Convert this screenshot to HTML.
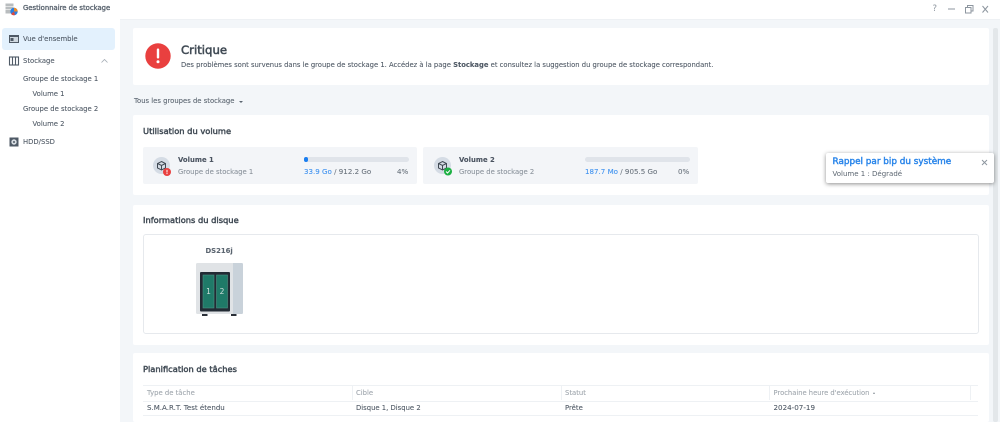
<!DOCTYPE html>
<html><head><meta charset="utf-8">
<style>
html{background:#f3f6f9}
html,body{margin:0;padding:0;width:1000px;height:422px;overflow:hidden;font-family:"DejaVu Sans","Liberation Sans",sans-serif;color:#4a5360}
body{filter:blur(.2px)}
.a{position:absolute;white-space:nowrap}
.t{font-size:6.85px;line-height:10px;-webkit-text-stroke:.08px currentColor}
.card{position:absolute;left:133px;width:856px;background:#fff;border-radius:2px}
.h{font-size:8.3px;line-height:12px;color:#414b55;-webkit-text-stroke:.45px #414b55}
.box{position:absolute;top:147px;height:37px;background:#f3f5f8;border-radius:2px}
.bar{position:absolute;top:157px;width:105px;height:4.5px;background:#e0e4ea;border-radius:3px}
svg{position:absolute;overflow:visible}
</style></head><body>
<div class="a" style="left:0;top:0;width:1000px;height:18.5px;background:#fff;border-bottom:1px solid #eef1f4"></div>
<div class="a" style="left:0;top:19px;width:120px;height:403px;background:#fff"></div>

<svg style="left:5px;top:3px" width="13" height="13" viewBox="0 0 13 13"><rect x="0.5" y="0.5" width="8" height="10" fill="#b9bdbf"/><path d="M0.5 3.5h8M0.5 6.5h8" stroke="#eee" stroke-width=".8"/><circle cx="9" cy="8.5" r="3.7" fill="#2b7fe0"/><path d="M9 4.8a3.7 3.7 0 0 1 3.7 3.7H9z" fill="#f08a24"/><path d="M6 11a3.7 3.7 0 0 0 4 1l-1-3.500z" fill="#e0483c"/></svg>
<div class="a t" style="left:23px;top:3px;color:#5b6570;-webkit-text-stroke:.35px #5b6570">Gestionnaire de stockage</div>

<div class="a" style="left:932.500px;top:4px;font-size:8.5px;line-height:11px;color:#8d969f">?</div>
<svg style="left:945px;top:4px" width="50" height="10" viewBox="0 0 50 10" fill="none" stroke="#8d969f" stroke-width="1"><path d="M3 5h7"/><path d="M20.500 3.500h5.500v5.500h-5.500zM22.500 3.500V1.500h5.500v5.500h-2"/><path d="M37.500 2l5.500 6.500M43 2l-5.500 6.500"/></svg>

<div class="a" style="left:2px;top:28px;width:113px;height:22px;background:#e3f1fd;border-radius:3px"></div>
<svg style="left:9px;top:34px" width="10" height="10" viewBox="0 0 10 10"><rect x="0" y="1" width="10" height="8" fill="#4f5a66"/><rect x="1" y="3" width="8" height="5" fill="#cfd8e0"/><rect x="1.500" y="4" width="3" height="3" fill="#4f5a66"/></svg>
<div class="a t" style="left:23px;top:34px;color:#4f5965">Vue d'ensemble</div>
<svg style="left:9px;top:56px" width="10" height="10" viewBox="0 0 10 10" fill="none" stroke="#4f5a66" stroke-width="1.100"><rect x=".5" y="1" width="9" height="8"/><path d="M3.500 1v8M6.500 1v8"/></svg>
<div class="a t" style="left:23px;top:56px;color:#4f5965">Stockage</div>
<svg style="left:101px;top:59px" width="7" height="4" viewBox="0 0 7 4" fill="none" stroke="#a5adb5" stroke-width=".8"><path d="M.5 3.500L3.500.5l3 3"/></svg>
<div class="a t" style="left:23px;top:74px;color:#4f5965">Groupe de stockage 1</div>
<div class="a t" style="left:32.500px;top:89px;color:#4f5965">Volume 1</div>
<div class="a t" style="left:23px;top:104px;color:#4f5965">Groupe de stockage 2</div>
<div class="a t" style="left:32.500px;top:119px;color:#4f5965">Volume 2</div>
<svg style="left:9px;top:137px" width="10" height="10" viewBox="0 0 10 10"><rect x="0.500" y="0.500" width="9" height="9" fill="#4f5a66"/><circle cx="5" cy="5" r="2.700" fill="#d8dde2"/><circle cx="5" cy="5" r="1" fill="#4f5a66"/></svg>
<div class="a t" style="left:23px;top:137px;color:#4f5965">HDD/SSD</div>

<div class="a" style="left:993px;top:28px;width:4.500px;height:394px;background:#e3e7ea;border-radius:2px"></div>

<div class="card" style="top:28px;height:57px"></div>
<svg style="left:145px;top:43px" width="26" height="26" viewBox="0 0 26 26"><circle cx="13" cy="13" r="12.700" fill="#e9403f"/><rect x="11.800" y="5.500" width="2.400" height="10" rx="1" fill="#fff"/><circle cx="13" cy="18.700" r="1.500" fill="#fff"/></svg>
<div class="a" style="left:181px;top:43px;font-size:11.700px;line-height:15px;color:#414b55;-webkit-text-stroke:.55px #414b55">Critique</div>
<div class="a t" style="left:181px;top:60px;color:#4f5965;font-size:6.81px">Des problèmes sont survenus dans le groupe de stockage 1. Accédez à la page <b>Stockage</b> et consultez la suggestion du groupe de stockage correspondant.</div>

<div class="a t" style="left:134px;top:95.500px;color:#5b6570">Tous les groupes de stockage</div>
<div class="a" style="left:238.500px;top:100.500px;width:0;height:0;border:2px solid transparent;border-top:2px solid #5b6570"></div>

<div class="card" style="top:115px;height:80px"></div>
<div class="a h" style="left:143px;top:125px">Utilisation du volume</div>

<div class="box" style="left:143px;width:274px"></div>
<svg style="left:153px;top:157px" width="20" height="20" viewBox="0 0 20 20"><circle cx="8.500" cy="8.500" r="8.500" fill="#d5dce5"/><path d="M8.500 4.500l4 2v4.500l-4 2-4-2V6.500zM4.500 6.500l4 2 4-2M8.500 8.500V13" fill="none" stroke="#3f4852" stroke-width="1"/><circle cx="14" cy="15" r="4" fill="#e9403f"/><rect x="13.500" y="12.800" width="1" height="2.700" fill="#fff"/><rect x="13.500" y="16.100" width="1" height="1" fill="#fff"/></svg>
<div class="a t" style="left:178px;top:155px;font-weight:bold;color:#4a5360">Volume 1</div>
<div class="a t" style="left:178px;top:167px;color:#8b939c">Groupe de stockage 1</div>
<div class="bar" style="left:304px"></div>
<div class="a" style="left:304px;top:157px;width:4px;height:4.500px;background:#1a7ef0;border-radius:3px"></div>
<div class="a t" style="left:304px;top:167px;color:#6a737d;font-size:7.1px"><span style="color:#3f92f0">33.9 Go</span> / 912.2 Go</div>
<div class="a t" style="left:397px;top:167px;color:#6a737d;font-size:7.1px">4%</div>

<div class="box" style="left:423px;width:275px"></div>
<svg style="left:434px;top:157px" width="20" height="20" viewBox="0 0 20 20"><circle cx="8.500" cy="8.500" r="8.500" fill="#d5dce5"/><path d="M8.500 4.500l4 2v4.500l-4 2-4-2V6.500zM4.500 6.500l4 2 4-2M8.500 8.500V13" fill="none" stroke="#3f4852" stroke-width="1"/><circle cx="14" cy="14.500" r="4" fill="#1cb043"/><path d="M12 14.500l1.500 1.500 2.500-2.700" fill="none" stroke="#fff" stroke-width="1"/></svg>
<div class="a t" style="left:459px;top:155px;font-weight:bold;color:#4a5360">Volume 2</div>
<div class="a t" style="left:459px;top:167px;color:#8b939c">Groupe de stockage 2</div>
<div class="bar" style="left:585px"></div>
<div class="a t" style="left:585px;top:167px;color:#6a737d;font-size:7.1px"><span style="color:#3f92f0">187.7 Mo</span> / 905.5 Go</div>
<div class="a t" style="left:678px;top:167px;color:#6a737d;font-size:7.1px">0%</div>

<div class="card" style="top:205px;height:140px"></div>
<div class="a h" style="left:143px;top:214px">Informations du disque</div>
<div class="a" style="left:143px;top:234px;width:834px;height:98px;border:1px solid #e6e9ed;border-radius:3px"></div>
<div class="a t" style="left:205.500px;top:245.500px;font-weight:bold;color:#5b6570">DS216j</div>
<svg style="left:196px;top:263px" width="48" height="54" viewBox="0 0 48 54"><rect x="0" y="0" width="47" height="51" rx="1.500" fill="#e0e3e6"/><path d="M37 0h8.500a1.500 1.500 0 0 1 1.500 1.500V49.500a1.500 1.500 0 0 1-1.500 1.500H37z" fill="#c9d2da"/><rect x="4" y="9" width="30" height="39.500" rx="1" fill="#222b34"/><rect x="7" y="12" width="11" height="33" fill="#1f7a68" stroke="#4d9183" stroke-width=".6"/><rect x="20.500" y="12" width="11" height="33" fill="#1f7a68" stroke="#4d9183" stroke-width=".6"/><rect x="6" y="51" width="5.500" height="2" fill="#2a3038"/><rect x="35" y="51" width="5.500" height="2" fill="#2a3038"/><text x="12.500" y="31" font-size="7.500" fill="#cfdedb" text-anchor="middle" font-family="DejaVu Sans">1</text><text x="26" y="31" font-size="7.500" fill="#cfdedb" text-anchor="middle" font-family="DejaVu Sans">2</text></svg>

<div class="card" style="top:353px;height:69px"></div>
<div class="a h" style="left:143px;top:363px">Planification de tâches</div>
<div class="a" style="left:143px;top:385px;width:835px;height:15px;border-top:1px solid #eef1f4;border-bottom:1px solid #eef1f4"></div>
<div class="a" style="left:143px;top:415px;width:835px;height:1px;background:#eef1f4"></div>
<div class="a" style="left:351.500px;top:385px;width:1px;height:15px;background:#eef1f4"></div>
<div class="a" style="left:560.500px;top:385px;width:1px;height:15px;background:#eef1f4"></div>
<div class="a" style="left:769px;top:385px;width:1px;height:15px;background:#eef1f4"></div>
<div class="a" style="left:969.500px;top:385px;width:1px;height:15px;background:#eef1f4"></div>
<div class="a t" style="left:147px;top:388px;color:#a0a7ae">Type de tâche</div>
<div class="a t" style="left:356px;top:388px;color:#a0a7ae">Cible</div>
<div class="a t" style="left:565px;top:388px;color:#a0a7ae">Statut</div>
<div class="a t" style="left:773.500px;top:388px;color:#a0a7ae;font-size:6.75px">Prochaine heure d'exécution</div>
<div class="a" style="left:872.500px;top:390.500px;width:0;height:0;border:1.500px solid transparent;border-bottom:2px solid #8b939c"></div>
<div class="a t" style="left:147px;top:403px;color:#4f5965;font-size:7.05px">S.M.A.R.T. Test étendu</div>
<div class="a t" style="left:356px;top:403px;color:#4f5965">Disque 1, Disque 2</div>
<div class="a t" style="left:565px;top:403px;color:#4f5965">Prête</div>
<div class="a t" style="left:773.500px;top:403px;color:#4f5965;font-size:7.15px">2024-07-19</div>

<div class="a" style="left:826px;top:153px;width:168px;height:30px;background:#fff;border-radius:2px;box-shadow:0 1px 4px rgba(0,0,0,.45)"></div>
<div class="a" style="left:832.500px;top:156px;font-size:8.85px;line-height:12px;color:#2b86ea;-webkit-text-stroke:.45px #2b86ea">Rappel par bip du système</div>
<div class="a" style="left:832.500px;top:169px;font-size:7px;line-height:10px;color:#5b6570">Volume 1 : Dégradé</div>
<svg style="left:981px;top:158.500px" width="7" height="7" viewBox="0 0 7 7" fill="none" stroke="#8d969f" stroke-width="1"><path d="M1 1l5 5M6 1L1 6"/></svg>
</body></html>
